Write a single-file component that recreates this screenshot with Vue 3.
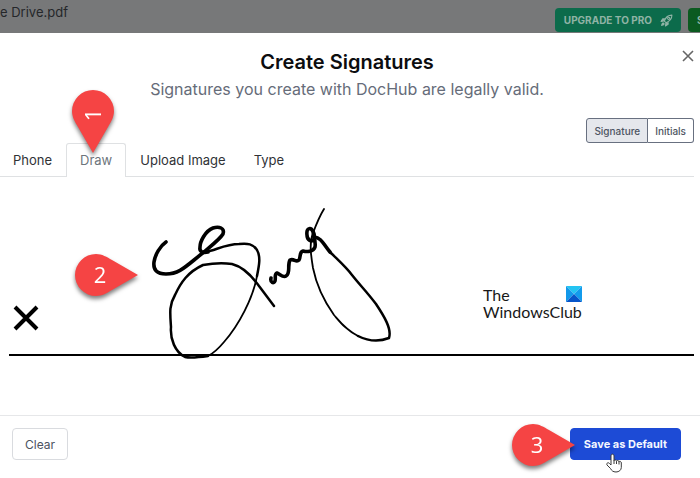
<template>
    <div class="page">
        <header class="topbar">
            <span class="filename">e Drive.pdf</span>
            <div class="topbar-actions">
                <button class="btn-upgrade" type="button">
                    UPGRADE TO PRO
                    <svg class="rocket" viewBox="0 0 24 24" aria-hidden="true">
                        <path d="M8 13c2-6 6-11 14-11 0 8-5 12-11 14zM9 9H5l-3 5 5-1M15 15v4l-5 3 1-5" />
                        <path class="rocket-solid" d="M9 9H5l-3 5 5-1zM15 15v4l-5 3 1-5zM6 15c-3 1-4 4-4 7 3 0 6-1 7-4z" />
                        <circle cx="16" cy="8" r="2" />
                    </svg>
                </button>
                <button class="btn-send" type="button">S</button>
            </div>
        </header>

        <main class="modal">
            <button class="btn-close" type="button" aria-label="Close">
                <svg viewBox="0 0 12 12"><path d="M1 1l10 10M11 1L1 11" /></svg>
            </button>

            <div class="modal-header">
                <h1>Create Signatures</h1>
                <p>Signatures you create with DocHub are legally valid.</p>
            </div>

            <div class="kinds">
                <button
                    v-for="item in kinds"
                    :key="item"
                    type="button"
                    :class="{ active: item === kind }"
                    @click="kind = item"
                >{{ item }}</button>
            </div>

            <nav class="tabs">
                <button
                    v-for="item in tabs"
                    :key="item"
                    type="button"
                    :class="{ active: item === tab }"
                    @click="tab = item"
                >{{ item }}</button>
            </nav>

            <section class="pad">
                <div class="pad-line">
                    <svg class="cross" viewBox="0 0 26 26"><path d="M2 2l22 22M24 2L2 24" /></svg>
                    <svg v-show="!cleared" class="signature" viewBox="150 205 245 155">
                        <path class="thick" d="M166 242C160 246 155 255 154 262C153 270 157 274 166 274C180 274 186 266 204 252" />
                        <path class="thick" d="M204 252C211 246 220 239 223 234C225 228 219 226 213 228C205 231 200 242 200 247C199 252 203 253 208 252" />
                        <path class="medium" d="M206 252C216 250 226 244 239 244C248 243 253 244 257 250C261 257 259 266 257 276" />
                        <path class="thin" d="M257 276C253 298 239 325 224 342C219 348 214 353 208 356" />
                        <path class="medium" d="M208 356C201 357 190 358 185 357C175 352 170 339 171 327C170 313 169 305 175 295C181 282 188 272 203 265C214 263 225 263 232 264C244 267 254 279 259 286L274 306" />
                        <path class="thick" d="M271 278C270 283 274 284 275 281C276 278 274 274 277 273C280 274 283 278 286 276C291 273 287 265 290 260C294 258 296 263 299 260C301 257 299 252 303 251C307 252 313 252 315 247C316 242 314 237 313 232C312 227 306 227 307 235C307 240 312 243 314 239C315 236 314 231 311 229" />
                        <path class="thin" d="M324 209C319 217 316 225 313 233C309 243 311 256 313 268C316 283 324 301 334 315C340 322 346 330 358 336" />
                        <path class="medium" d="M358 336C370 342 379 342 389 338C392 329 384 316 376 304C367 292 359 284 352 275C346 267 338 260 330 252" />
                        <path class="thick" d="M330 252C323 244 322 238 314 237" />
                    </svg>
                    <div class="brand">
                        <div class="brand-top">
                            <span>The</span>
                            <svg viewBox="0 0 16 16" aria-hidden="true">
                                <path fill="#24c4f2" d="M0 0h16L8 8z" />
                                <path fill="#1298ea" d="M0 0l8 8-8 8z" />
                                <path fill="#139bec" d="M16 0v16L8 8z" />
                                <path fill="#0755c9" d="M0 16l8-8 8 8z" />
                            </svg>
                        </div>
                        <span>WindowsClub</span>
                    </div>
                </div>
            </section>

            <footer class="modal-footer">
                <button class="btn-clear" type="button" @click="cleared = true">Clear</button>
                <button class="btn-save" type="button">Save as Default</button>
            </footer>
        </main>

        <svg
            v-for="pin in pins"
            :key="pin.label"
            class="pin"
            :class="pin.place"
            viewBox="0 0 64 42"
        >
            <path d="M21 0C27 0 32 3 37 6L63 21L37 36C32 39 27 42 21 42A21 21 0 0 1 21 0z" />
            <text x="25" y="29" text-anchor="middle">{{ pin.label }}</text>
        </svg>
        <svg class="pin pin-tab" viewBox="0 0 42 64">
            <path d="M0 21A21 21 0 0 1 42 21C42 27 39 32 36 37L21 63L6 37C3 32 0 27 0 21z" />
            <text transform="translate(29 25) rotate(-90)" text-anchor="middle">1</text>
        </svg>

        <svg class="pointer" viewBox="0 0 16 20" aria-hidden="true">
            <path d="M5 12V3c0-2.500 3-2.500 3 0v5c0-1.500 2.500-1.500 2.500.5 0-1.500 2.500-1.500 2.500.5 0-1.200 2.300-1 2.300 1v4.500c0 2.500-2.300 4.500-5.300 4.500-3 0-4.500-1.500-5.500-3.500L1 12c-1-2 1.500-3 2.500-1.500zM8 8v3M10.500 8.500V11M13 9v2.500" />
        </svg>
    </div>
</template>

<script setup>
import { ref } from 'vue'

const kinds = ['Signature', 'Initials']
const tabs = ['Phone', 'Draw', 'Upload Image', 'Type']
const pins = [
    { label: '2', place: 'pin-pad' },
    { label: '3', place: 'pin-save' }
]

const kind = ref('Signature')
const tab = ref('Draw')
const cleared = ref(false)
</script>

<style>
body {
    background: #fff;
}
</style>

<style scoped>
.page {
    position: relative;
    min-height: 100vh;
    overflow: hidden;
    font-family: Inter, "Liberation Sans", sans-serif;
}

button {
    font-family: inherit;
    cursor: pointer;
}

.topbar {
    display: flex;
    justify-content: space-between;
    height: 33px;
    overflow: hidden;
    background: #777879;
}

.filename {
    padding-top: 4px;
    font-size: 13px;
    line-height: 16px;
    color: #25272a;
}

.topbar-actions {
    display: flex;
    gap: 7px;
    padding-top: 8px;
}

.btn-upgrade,
.btn-send {
    display: flex;
    align-items: center;
    height: 24px;
    border: none;
    border-radius: 4px;
    font-size: 10px;
    font-weight: 700;
    white-space: nowrap;
    color: #8fb3a5;
}

.btn-upgrade {
    gap: 8px;
    padding: 0 8px 0 9px;
    background: #0c6b4b;
}

.btn-send {
    width: 12px;
    padding: 0 0 0 9px;
    overflow: hidden;
    border-radius: 4px 0 0 4px;
    background: #0b5a20;
}

.rocket {
    width: 13px;
    height: 13px;
    fill: none;
    stroke: #8fb3a5;
    stroke-width: 2;
    stroke-linejoin: round;
}

.rocket-solid {
    fill: #8fb3a5;
    stroke: none;
}

.modal {
    position: relative;
    background: #fff;
}

.btn-close {
    position: absolute;
    top: 17px;
    right: 6px;
    width: 12px;
    height: 12px;
    padding: 0;
    border: none;
    background: none;
}

.btn-close svg {
    display: block;
    fill: none;
    stroke: #666;
    stroke-width: 1.6;
}

.modal-header {
    padding: 16px 6px 0 0;
    text-align: center;
}

h1 {
    margin: 0;
    font-size: 20px;
    font-weight: 600;
    line-height: 26px;
    color: #0c0d0f;
}

.modal-header p {
    margin: 2px 0 0;
    font-size: 16px;
    line-height: 24px;
    color: #666c79;
}

.kinds {
    display: flex;
    justify-content: flex-end;
    padding: 17px 6px 0 0;
}

.kinds button {
    height: 25px;
    padding: 0 8px;
    border: 1px solid #687080;
    font-size: 10px;
    font-weight: 500;
    color: #4d5462;
    background: #fff;
}

.kinds button:first-child {
    padding: 0 7px;
    border-radius: 3px 0 0 3px;
}

.kinds button:last-child {
    padding: 0 7px;
    border-left: none;
    border-radius: 0 3px 3px 0;
}

.kinds .active {
    background: #e5e7ec;
}

.tabs {
    display: flex;
    margin: 0 6px 0 -1px;
    border-bottom: 1px solid #dfe1e3;
}

.tabs button {
    height: 34px;
    margin-bottom: -1px;
    padding: 0 13px 1px;
    border: 1px solid transparent;
    border-bottom: none;
    border-radius: 3px 3px 0 0;
    font-size: 13px;
    color: #303236;
    background: none;
}

.tabs .active {
    border-color: #dfe1e3;
    color: #6d757c;
    background: #fff;
}

.pad {
    padding: 0 6px 59px 9px;
    border-bottom: 1px solid #e6e7e9;
}

.pad-line {
    display: flex;
    align-items: flex-end;
    height: 177px;
    border-bottom: 2px solid #000;
}

.cross {
    flex: none;
    width: 26px;
    height: 26px;
    margin: 0 111px 23px 4px;
    fill: none;
    stroke: #000;
    stroke-width: 4;
}

.signature {
    flex: none;
    width: 245px;
    height: 155px;
    margin-bottom: -6px;
    fill: none;
    stroke: #000;
    stroke-linecap: round;
    stroke-linejoin: round;
}

.thick {
    stroke-width: 3.6;
}

.medium {
    stroke-width: 2.5;
}

.thin {
    stroke-width: 1.8;
}

.brand {
    width: 99px;
    margin: 0 0 34px 88px;
    font-family: Lato, "Noto Sans", sans-serif;
    font-size: 16px;
    line-height: 17px;
    color: #181818;
}

.brand-top {
    display: flex;
    justify-content: space-between;
}

.brand-top svg {
    width: 16px;
    height: 16px;
}

.modal-footer {
    display: flex;
    justify-content: space-between;
    padding: 12px 19px 18px 12px;
}

.btn-clear,
.btn-save {
    height: 32px;
    padding: 0 13px;
    border-radius: 4px;
}

.btn-clear {
    padding: 0 12px;
    border: 1px solid #d9dbdf;
    font-size: 12px;
    color: #4c5361;
    background: #fff;
}

.btn-save {
    border: 1px solid #1d4bd6;
    font-size: 11px;
    font-weight: 700;
    color: #f4f7ff;
    background: #1d4bd6;
}

.pin {
    position: absolute;
    width: 64px;
    height: 42px;
    overflow: visible;
    filter: drop-shadow(0 3px 2px rgba(0, 0, 0, 0.5));
    pointer-events: none;
}

.pin path {
    fill: #f54444;
}

.pin text {
    font-family: "Open Sans", sans-serif;
    font-size: 22px;
    fill: #fff;
}

.pin-tab {
    top: 90px;
    left: 72px;
    width: 42px;
    height: 64px;
}

.pin-pad {
    top: 254px;
    left: 75px;
}

.pin-save {
    top: 424px;
    right: 124px;
}

.pointer {
    position: absolute;
    top: 453px;
    right: 78px;
    width: 16px;
    height: 20px;
    overflow: visible;
    fill: #fff;
    stroke: #3a3a3a;
    pointer-events: none;
}
</style>
